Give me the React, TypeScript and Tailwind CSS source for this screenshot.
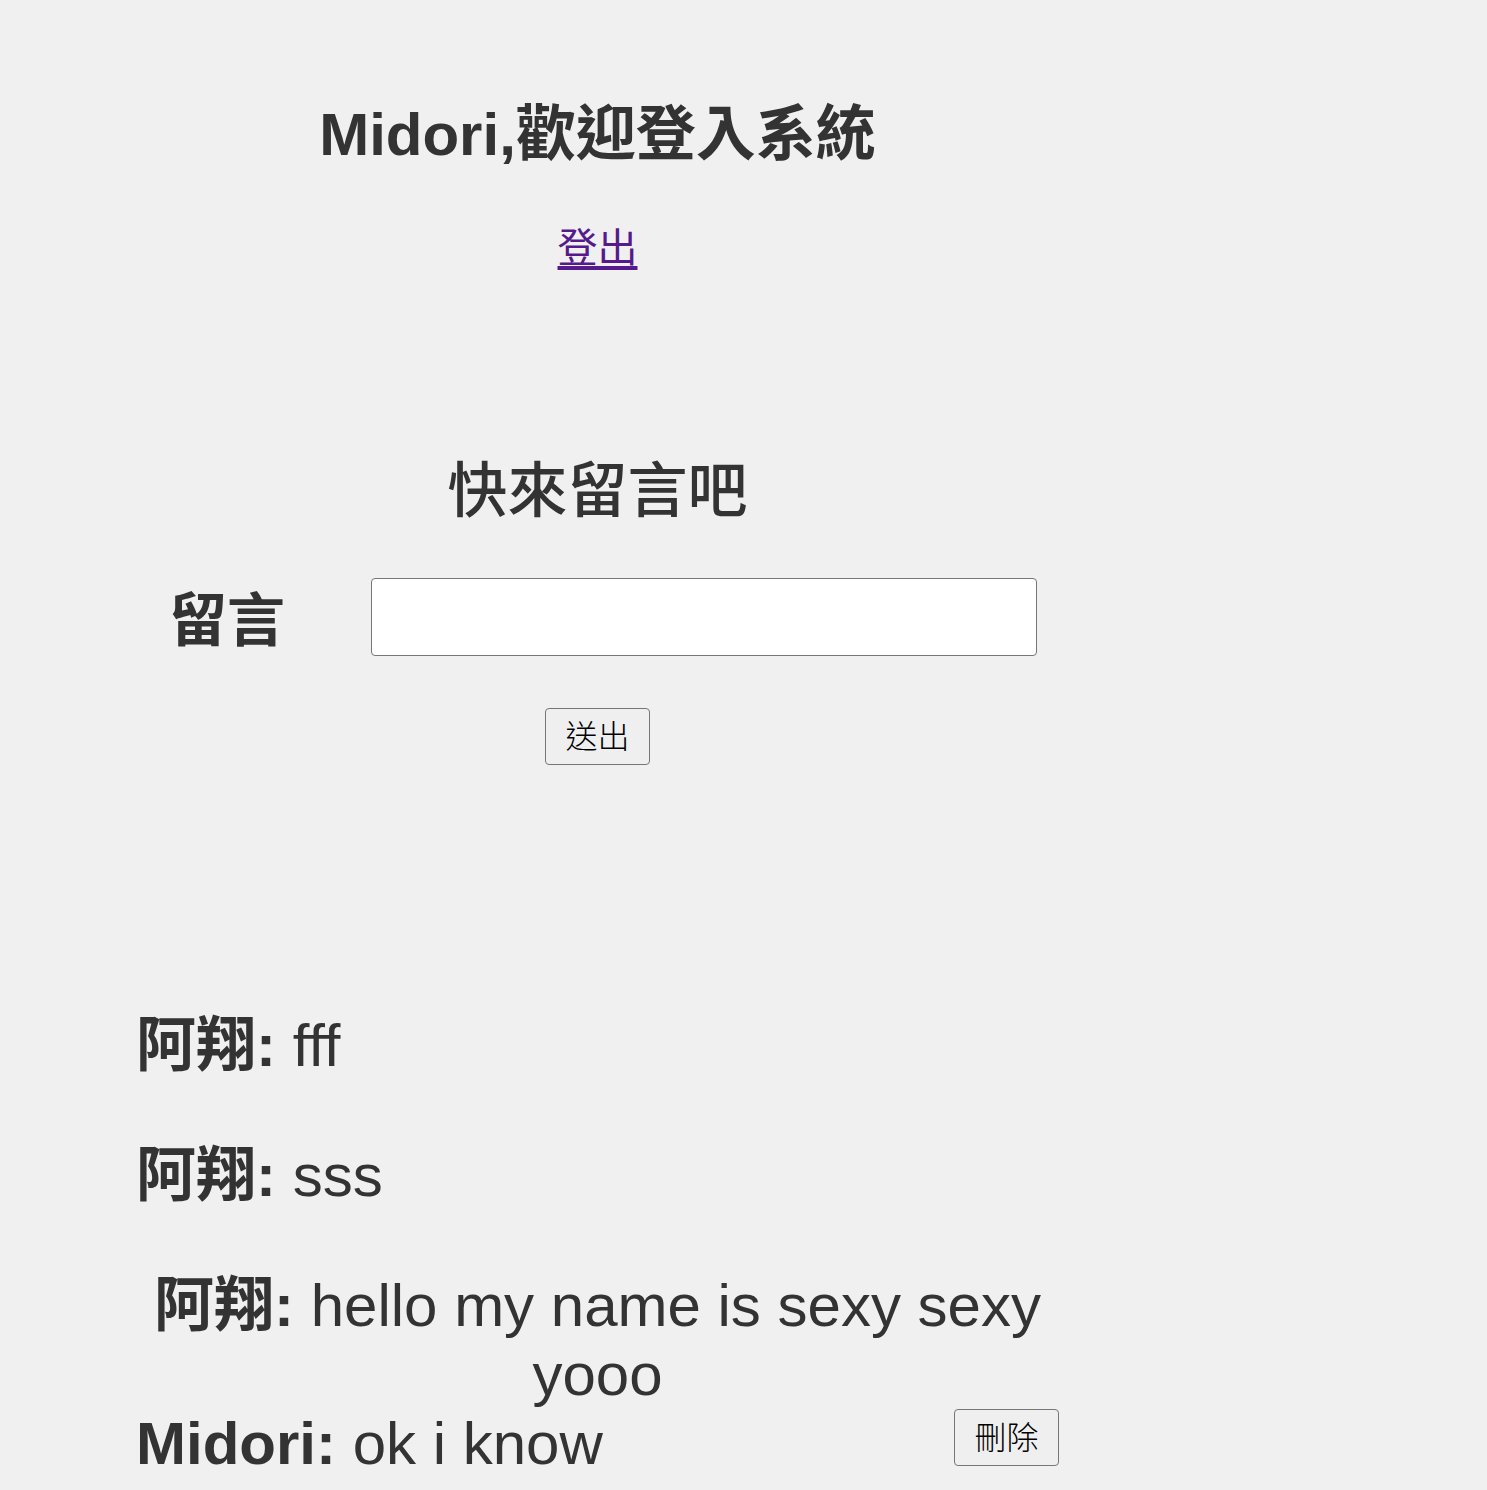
import { useState } from "react";

interface Message {
  id: number;
  name: string;
  text: string;
  centered?: boolean;
  mine?: boolean;
}

const MESSAGES: Message[] = [
  { id: 1, name: "阿翔", text: "fff" },
  { id: 2, name: "阿翔", text: "sss" },
  { id: 3, name: "阿翔", text: "hello my name is sexy sexy yooo", centered: true },
  { id: 4, name: "Midori", text: "ok i know", mine: true }
];

const btn =
  "h-[57px] w-[105px] rounded-[4px] border border-[#767676] bg-[#efefef] text-[32px] font-light leading-none text-black";

export default function App() {
  const [msg, setMsg] = useState<string>("");

  return (
    <div className="min-h-screen bg-[#f0f0f0] font-['Liberation_Sans','Noto_Sans_CJK_TC',sans-serif] text-[#333]">
      <div className="ml-[136px] flex w-[923px] flex-col pt-[100px]">
        <h1 className="text-center text-[60px] font-bold leading-[69px]">
          Midori,歡迎登入系統
        </h1>
        <div className="mt-[56px] text-center text-[40px] leading-[46px]">
          <a href="#" className="text-[#551a8b] underline underline-offset-[4px]">
            登出
          </a>
        </div>

        <h2 className="mt-[186px] text-center text-[60px] font-medium leading-[69px]">
          快來留言吧
        </h2>
        <div className="mt-[52px] flex h-[78px] items-center">
          <label className="mt-[6px] w-[182px] text-center text-[58px] font-bold leading-[69px]">
            留言
          </label>
          <input
            value={msg}
            onChange={(e) => setMsg(e.target.value)}
            className="ml-[53px] h-[78px] w-[666px] rounded-[4px] border border-[#767676] bg-white px-3 text-[32px]"
          />
        </div>
        <button className={`mt-[52px] self-center ${btn}`}>送出</button>

        <div className="mt-[246px] flex flex-col">
          {MESSAGES.map((m, i) => (
            <div
              key={m.id}
              className={`flex items-start justify-between ${
                i === 0 ? "" : m.mine ? "" : "mt-[61px]"
              }`}
            >
              <p
                className={`text-[60px] leading-[69px] ${
                  m.centered ? "w-full text-center" : ""
                }`}
              >
                <span className="font-bold">{m.name}:</span> {m.text}
              </p>
              {m.mine && <button className={btn}>刪除</button>}
            </div>
          ))}
        </div>
      </div>
    </div>
  );
}
